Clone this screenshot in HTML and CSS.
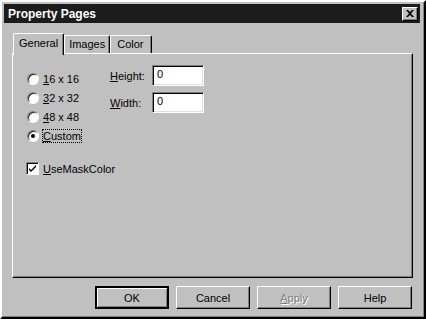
FILE: index.html
```html
<!DOCTYPE html>
<html lang="en">
<head>
    <meta charset="UTF-8">
    <title>Property Pages</title>
    <link rel="stylesheet" href="styles.css">
</head>
<body>
    <div class="window">
        <div class="titlebar">
            <span class="title">Property Pages</span>
            <span class="close">
                <svg width="8" height="7" viewBox="0 0 8 7"><path d="M0 0h2l2 2 2-2h2L5 3.5 8 7H6L4 5 2 7H0l3-3.5z" fill="#000"/></svg>
            </span>
        </div>
        <div class="tabs">
            <div class="tab active">General</div>
            <div class="tab">Images</div>
            <div class="tab wide">Color</div>
        </div>
        <div class="panel">
            <div class="top">
                <div class="radios">
                    <div class="opt"><span class="radio"></span><span><u>1</u>6 x 16</span></div>
                    <div class="opt"><span class="radio"></span><span><u>3</u>2 x 32</span></div>
                    <div class="opt"><span class="radio"></span><span><u>4</u>8 x 48</span></div>
                    <div class="opt"><span class="radio checked"></span><span class="focus"><u>C</u>ustom</span></div>
                </div>
                <div class="fields">
                    <div class="field"><span class="lbl"><u>H</u>eight:</span><span class="input">0</span></div>
                    <div class="field"><span class="lbl"><u>W</u>idth:</span><span class="input">0</span></div>
                </div>
            </div>
            <div class="check">
                <span class="box">
                    <svg width="9" height="9" viewBox="0 0 9 9"><path d="M1 4l2 2 5-5v2L3 8 1 6z" fill="#000"/></svg>
                </span>
                <span><u>U</u>seMaskColor</span>
            </div>
        </div>
        <div class="buttons">
            <div class="btn default">OK</div>
            <div class="btn">Cancel</div>
            <div class="btn disabled"><u>A</u>pply</div>
            <div class="btn">Help</div>
        </div>
    </div>
</body>
</html>
```

FILE: styles.css
```css
body {
    margin: 0;
    background-color: #fff;
    font-family: "Liberation Sans", Arial, sans-serif;
    font-size: 11px;
    color: #000;
}
.window {
    width: 426px;
    height: 319px;
    box-sizing: border-box;
    background-color: #c0c0c0;
    border: 2px solid;
    border-color: #fff #000 #000 #fff;
    box-shadow: inset -1px -1px #808080;
    padding: 2px;
    display: flex;
    flex-direction: column;
}
.titlebar {
    height: 19px;
    background-color: #1c1c1c;
    display: flex;
    align-items: center;
    justify-content: space-between;
    padding: 0 2px 0 4px;
    margin-right: 2px;
}
.title {
    color: #fff;
    font-weight: bold;
    font-size: 12px;
}
.close {
    width: 16px;
    height: 14px;
    box-sizing: border-box;
    background-color: #c0c0c0;
    border: 1px solid;
    border-color: #fff #000 #000 #fff;
    box-shadow: inset -1px -1px #808080;
    display: flex;
    align-items: center;
    justify-content: center;
}
.tabs {
    display: flex;
    align-items: flex-end;
    margin: 9px 0 0 8px;
    height: 21px;
}
.tab {
    height: 18px;
    box-sizing: border-box;
    padding: 2px 4px 0 4px;
    border: 1px solid;
    border-bottom: none;
    border-color: #fff #000 #000 #fff;
    border-radius: 2px 2px 0 0;
    box-shadow: inset -1px 0 #808080;
}
.tab.wide {
    padding: 2px 7px 0 6px;
}
.tab.active {
    height: 22px;
    margin-bottom: -2px;
    margin-left: 1px;
    padding: 3px 5px 0 5px;
    background-color: #c0c0c0;
    position: relative;
    z-index: 1;
}
.panel {
    margin: 0 9px 0 8px;
    height: 225px;
    box-sizing: border-box;
    border: 1px solid;
    border-color: #fff #000 #000 #fff;
    box-shadow: inset -1px -1px #808080;
    padding: 15px 0 0 14px;
}
.top {
    display: grid;
    grid-template-columns: 83px auto;
}
.opt {
    display: flex;
    align-items: center;
    gap: 4px;
    height: 19px;
}
.radio {
    width: 12px;
    height: 12px;
    box-sizing: border-box;
    border-radius: 50%;
    background-color: #fff;
    border: 1px solid;
    border-color: #808080 #fff #fff #808080;
    box-shadow: inset 1px 1px #222;
    display: flex;
    align-items: center;
    justify-content: center;
}
.radio.checked::after {
    content: "";
    width: 4px;
    height: 4px;
    border-radius: 50%;
    background-color: #000;
}
.focus {
    outline: 1px dotted #000;
    outline-offset: 0;
}
.fields {
    display: flex;
    flex-direction: column;
    gap: 6px;
    margin-top: -4px;
}
.field {
    display: flex;
    align-items: center;
}
.lbl {
    width: 42px;
}
.input {
    width: 52px;
    height: 21px;
    box-sizing: border-box;
    background-color: #fff;
    border: 1px solid;
    border-color: #808080 #fff #fff #808080;
    box-shadow: inset 1px 1px #000, inset -1px -1px #dfdfdf;
    padding: 2px 4px;
}
.check {
    display: flex;
    align-items: center;
    gap: 4px;
    margin: 17px 0 0 -1px;
}
.box {
    width: 13px;
    height: 13px;
    box-sizing: border-box;
    background-color: #fff;
    border: 1px solid;
    border-color: #808080 #fff #fff #808080;
    box-shadow: inset 1px 1px #000;
    display: flex;
    align-items: center;
    justify-content: center;
}
.buttons {
    display: flex;
    justify-content: flex-end;
    gap: 7px;
    margin: 8px 10px 0 0;
}
.btn {
    width: 74px;
    height: 23px;
    box-sizing: border-box;
    border: 1px solid;
    border-color: #fff #000 #000 #fff;
    box-shadow: inset -1px -1px #808080;
    display: flex;
    align-items: center;
    justify-content: center;
}
.btn.default {
    border: 2px solid #000;
    box-shadow: inset 1px 1px #fff, inset -1px -1px #808080;
}
.btn.disabled {
    color: #808080;
    text-shadow: 1px 1px #fff;
}
```
